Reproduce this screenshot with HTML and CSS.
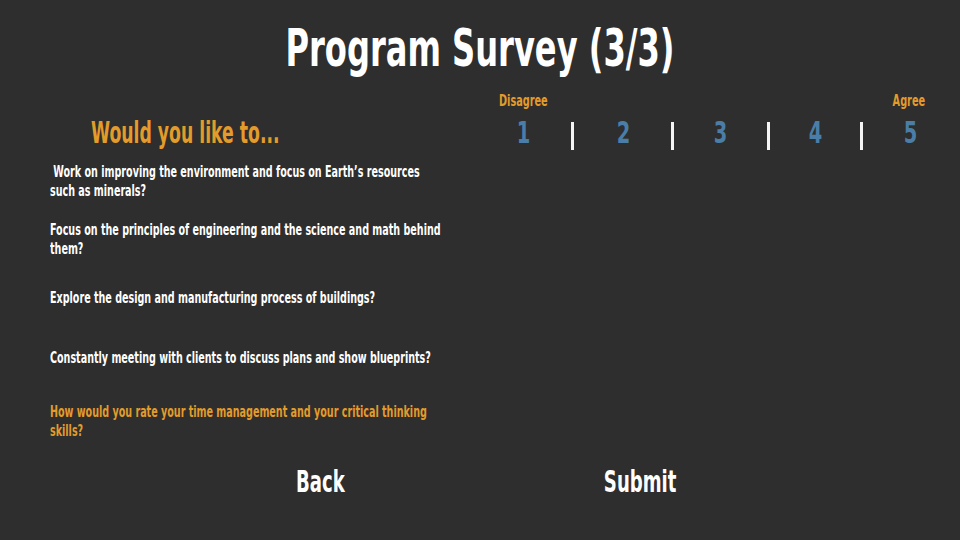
FILE: index.html
```html
<!DOCTYPE html>
<html lang="en">
<head>
<meta charset="utf-8">
<title>Program Survey (3/3)</title>
<link rel="stylesheet" href="styles.css">
</head>
<body>
<div class="page">
  <h1 class="title">Program Survey (3/3)</h1>
  <div class="top">
    <div class="scale-labels">
      <span class="label label-left">Disagree</span>
      <span class="label label-right">Agree</span>
    </div>
    <h2 class="lead">Would you like to...</h2>
    <div class="scale">
      <span class="num">1</span><span class="sep"></span>
      <span class="num">2</span><span class="sep"></span>
      <span class="num">3</span><span class="sep"></span>
      <span class="num">4</span><span class="sep"></span>
      <span class="num">5</span>
    </div>
  </div>
  <div class="questions">
    <div class="q-list">
      <p class="q q1">&nbsp;Work on improving the environment and focus on Earth’s resources such as minerals?</p>
      <p class="q q2">Focus on the principles of engineering and the science and math behind them?</p>
      <p class="q q3">Explore the design and manufacturing process of buildings?</p>
      <p class="q q4">Constantly meeting with clients to discuss plans and show blueprints?</p>
      <p class="q q5 accent">How would you rate your time management and your critical thinking skills?</p>
    </div>
  </div>
  <div class="actions">
    <button class="btn">Back</button>
    <button class="btn">Submit</button>
  </div>
</div>
</body>
</html>
```
FILE: styles.css
```css
* { box-sizing: border-box; }
html, body {
  margin: 0;
  padding: 0;
  background: #2e2e2e;
}
body {
  font-family: "DejaVu Sans Condensed", "DejaVu Sans", "Liberation Sans", sans-serif;
  font-weight: bold;
  color: #ffffff;
}
.page {
  width: 960px;
  height: 540px;
  display: flex;
  flex-direction: column;
  overflow: hidden;
}
.title {
  margin: 19px 0 0;
  font-size: 51px;
  line-height: 60px;
  text-align: center;
  font-weight: bold;
  transform: scaleX(0.7);
}
.top {
  display: grid;
  grid-template-columns: 499px 436px;
  grid-template-rows: 20px 44px;
  margin-top: 12px;
}
.scale-labels {
  grid-column: 2;
  grid-row: 1;
  display: flex;
  justify-content: space-between;
  width: 426px;
  color: #e39c2a;
  font-size: 15px;
  line-height: 20px;
}
.label { display: inline-block; transform: scaleX(0.72); }
.label-left { transform-origin: left center; }
.label-right { transform-origin: right center; }
.lead {
  grid-column: 1;
  grid-row: 2;
  margin: 0 0 0 91px;
  font-size: 30px;
  line-height: 44px;
  color: #e39c2a;
  white-space: nowrap;
  transform: scaleX(0.64);
  transform-origin: left center;
}
.scale {
  grid-column: 2;
  grid-row: 2;
  display: grid;
  grid-template-columns: 48.5px 50px 51px 48px 48px 48px 45px 48px 49.5px;
  align-items: start;
  justify-items: center;
}
.num {
  font-size: 30px;
  line-height: 44px;
  color: #4a7ea8;
  transform: scaleX(0.72);
}
.sep {
  width: 3px;
  height: 28px;
  margin-top: 11px;
  background: #f4f4f4;
}
.questions {
  padding-left: 50px;
}
.q-list {
  width: 594px;
  display: flex;
  flex-direction: column;
  transform: scaleX(0.665);
  transform-origin: left top;
}
.q {
  margin: 0;
  font-size: 16px;
  line-height: 19px;
}
.q1 { margin-top: 6.5px; }
.q2 { margin-top: 20px; }
.q3 { margin-top: 30px; }
.q4 { margin-top: 41px; }
.q5 { margin-top: 35px; }
.accent { color: #e39c2a; }
.actions {
  display: grid;
  grid-template-columns: 320px 320px;
  justify-content: center;
  justify-items: center;
  margin-top: 24px;
}
.btn {
  background: none;
  border: 0;
  padding: 0;
  color: #ffffff;
  font-family: inherit;
  font-weight: bold;
  font-size: 30px;
  line-height: 36px;
  cursor: pointer;
  transform: scaleX(0.67);
}
```
